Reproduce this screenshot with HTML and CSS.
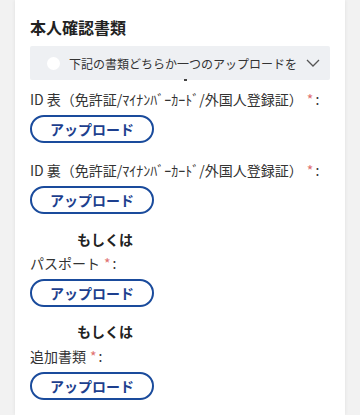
FILE: index.html
```html
<!DOCTYPE html>
<html lang="ja">
<head>
<meta charset="utf-8">
<link rel="stylesheet" href="styles.css">
</head>
<body>
<div class="page">
  <div class="card">
    <h2 class="title">本人確認書類</h2>
    <div class="notice">
      <span class="dot"></span>
      <span class="notice-text">下記の書類どちらか一つのアップロードを</span>
      <svg class="chev" width="14" height="8" viewBox="0 0 14 8"><path d="M1 1 L7 7 L13 1" fill="none" stroke="#555" stroke-width="1.3"/></svg>
    </div>
    <div class="tick"></div>
    <div class="field first">
      <div class="label">ID 表（免許証/ﾏｲﾅﾝﾊﾞｰｶｰﾄﾞ/外国人登録証）<span class="req">*</span>:</div>
      <button class="upload">アップロード</button>
    </div>
    <div class="field">
      <div class="label">ID 裏（免許証/ﾏｲﾅﾝﾊﾞｰｶｰﾄﾞ/外国人登録証）<span class="req">*</span>:</div>
      <button class="upload">アップロード</button>
    </div>
    <div class="or">もしくは</div>
    <div class="field tight">
      <div class="label">パスポート<span class="req">*</span>:</div>
      <button class="upload">アップロード</button>
    </div>
    <div class="or">もしくは</div>
    <div class="field tight">
      <div class="label">追加書類<span class="req">*</span>:</div>
      <button class="upload">アップロード</button>
    </div>
  </div>
</div>
</body>
</html>
```

FILE: styles.css
```css
html, body {
  margin: 0;
  padding: 0;
  background: #f2f2f2;
  font-family: "Noto Sans CJK JP", "Noto Sans", sans-serif;
}
.page {
  width: 360px;
  height: 415px;
  overflow: hidden;
}
.card {
  margin-left: 15px;
  width: 330px;
  min-height: 415px;
  background: #fff;
  box-shadow: 0 0 4px rgba(0,0,0,0.08);
  padding: 15px 15px 0 15px;
  box-sizing: border-box;
}
.title {
  margin: 0;
  font-size: 16px;
  font-weight: 700;
  color: #222;
  line-height: 24px;
}
.notice {
  margin-top: 7px;
  height: 34px;
  background: #eef0f3;
  border-radius: 2px;
  display: flex;
  align-items: center;
  padding-left: 17px;
  padding-right: 6px;
}
.dot {
  width: 13px;
  height: 13px;
  border-radius: 50%;
  background: #fff;
  flex: none;
}
.notice-text {
  margin-left: 9px;
  font-size: 12px;
  color: #333;
  white-space: nowrap;
}
.chev {
  margin-left: auto;
  margin-right: 4px;
}
.tick {
  width: 3px;
  height: 2px;
  background: #444;
  margin-left: 154px;
  margin-top: -1px;
}
.field {
  margin-top: 18px;
}
.field.first {
  margin-top: 9px;
}
.field.tight {
  margin-top: 5px;
}
.or + .field.tight ~ .or + .field.tight {
  margin-top: 6px;
}
.label {
  font-size: 14px;
  color: #333;
  line-height: 18px;
  white-space: nowrap;
}
.req {
  color: #e07070;
  margin-left: 4px;
  margin-right: 2px;
}
.upload {
  display: block;
  box-sizing: border-box;
  margin-top: 7px;
  width: 124px;
  height: 28px;
  border: 2px solid #1a4b9c;
  border-radius: 14px;
  background: #fff;
  color: #1d3f8e;
  font-family: "Noto Sans CJK JP", "Noto Sans", sans-serif;
  font-size: 14px;
  font-weight: 700;
  padding: 0;
  line-height: 24px;
}
.or {
  margin-top: 15px;
  width: 150px;
  text-align: center;
  font-size: 14px;
  font-weight: 700;
  color: #222;
  line-height: 20px;
}
.or ~ .or {
  margin-top: 14px;
}
```
